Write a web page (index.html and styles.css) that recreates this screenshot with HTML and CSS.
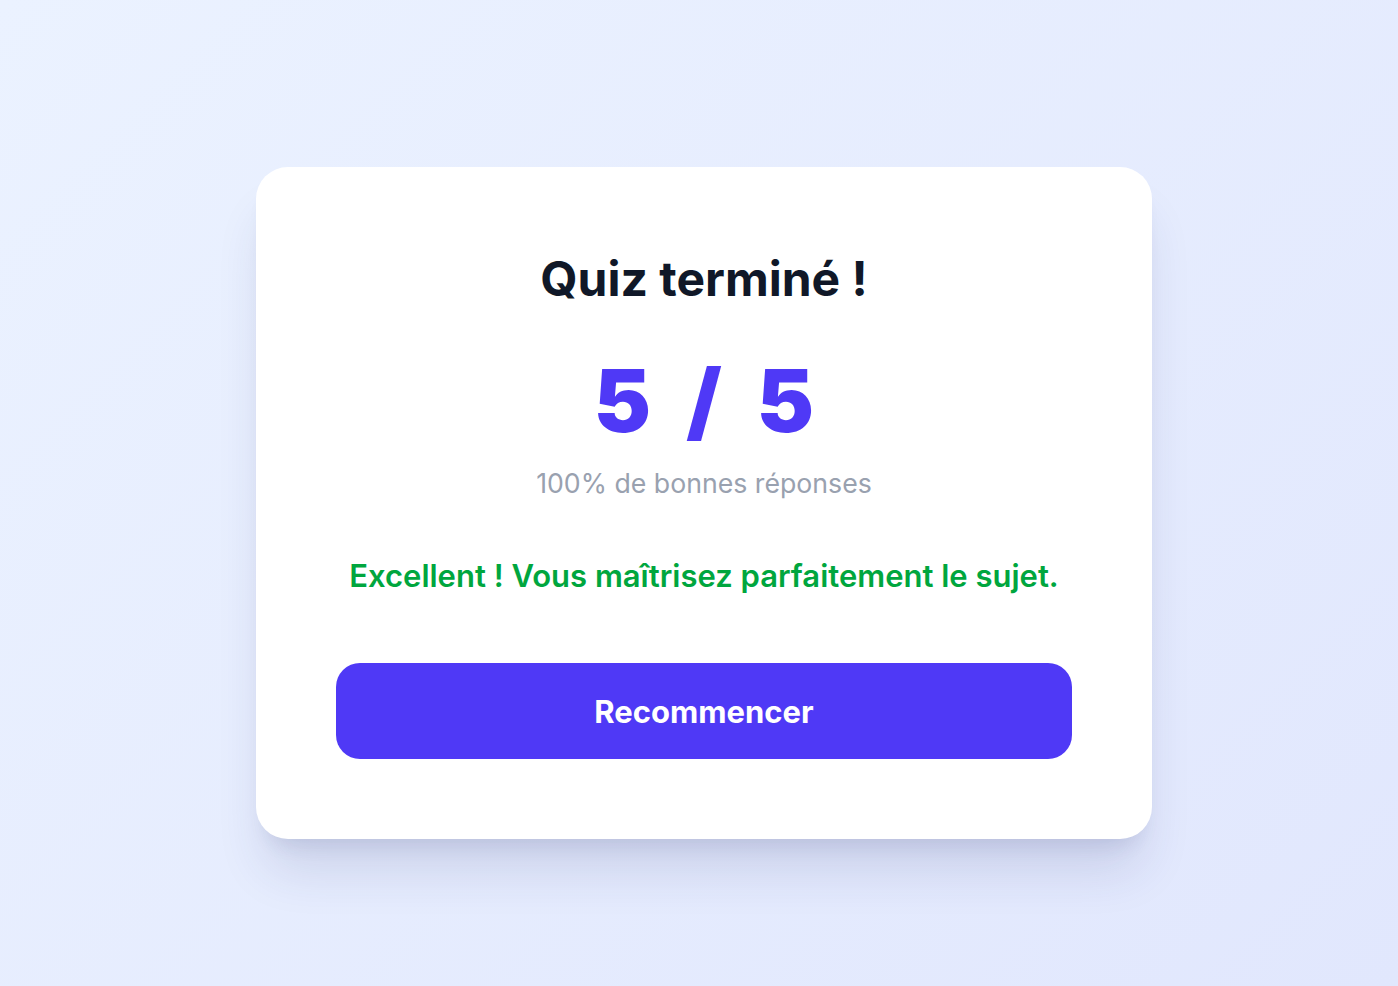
FILE: index.html
```html
<!DOCTYPE html>
<html lang="fr">

<head>
    <meta charset="UTF-8" />
    <meta name="viewport" content="width=device-width, initial-scale=1" />
    <title>Quiz terminé</title>
    <link rel="stylesheet" href="styles.css">
</head>

<body>
    <main class="page">
        <section class="result-card">
            <h1 class="result-title">Quiz terminé !</h1>

            <div class="result-score">5 / 5</div>
            <p class="result-percent">100% de bonnes réponses</p>

            <p class="result-message">Excellent ! Vous maîtrisez parfaitement le sujet.</p>

            <button class="btn-restart" type="button">Recommencer</button>
        </section>
    </main>
</body>

</html>
```

FILE: styles.css
```css
html,
body {
    height: 100%;
    margin: 0;
}

body {
    background: linear-gradient(135deg, #ebf2ff, #e1e7fd);
    font-family: Inter, "Noto Sans", sans-serif;
    color: #101828;
}

.page {
    min-height: 100%;
    box-sizing: border-box;
    padding: 20px 0 0 10px;
    display: flex;
    align-items: center;
    justify-content: center;
}

/* Carte du résultat */
.result-card {
    width: 896px;
    box-sizing: border-box;
    padding: 80px;
    background: #fff;
    border-radius: 32px;
    box-shadow: 0 40px 50px -10px rgba(40, 50, 110, 0.14), 0 16px 20px -12px rgba(40, 50, 110, 0.12);
    display: flex;
    flex-direction: column;
    align-items: center;
    text-align: center;
}

.result-title {
    margin: 0;
    font-size: 48px;
    line-height: 64px;
    font-weight: 700;
    color: #101828;
}

/* Score : chiffres larges et espacés */
.result-score {
    margin: 40px 0 0 9px;
    font-size: 86px;
    line-height: 100px;
    font-weight: 900;
    letter-spacing: 9px;
    color: #4f39f6;
}

.result-percent {
    margin: 12px 0 0 0;
    font-size: 26.7px;
    line-height: 40px;
    color: #99a1af;
}

.result-message {
    margin: 49px 0 0 0;
    font-size: 31px;
    line-height: 48px;
    font-weight: 600;
    color: #00a63e;
}

.btn-restart {
    margin-top: 63px;
    width: 100%;
    height: 96px;
    border: none;
    border-radius: 24px;
    background: #4f39f6;
    color: #fff;
    font-family: inherit;
    font-size: 31px;
    font-weight: 700;
    cursor: pointer;
}

.btn-restart:hover {
    background: #432dd7;
}
```
